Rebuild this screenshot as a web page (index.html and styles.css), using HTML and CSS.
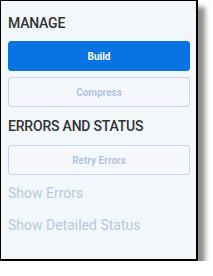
FILE: index.html
```html
<!DOCTYPE html>
<html lang="en">
<head>
  <meta charset="UTF-8">
  <title>Manage</title>
  <link rel="stylesheet" href="styles.css">
</head>
<body>
  <div class="panel">
    <h2 class="section-title">MANAGE</h2>
    <div class="btn-group">
      <button class="action-btn primary">Build</button>
      <button class="action-btn" disabled>Compress</button>
    </div>

    <h2 class="section-title errors">ERRORS AND STATUS</h2>
    <div class="btn-group">
      <button class="action-btn" disabled>Retry Errors</button>
    </div>

    <div class="links">
      <a class="link" href="#">Show Errors</a>
      <a class="link" href="#">Show Detailed Status</a>
    </div>
  </div>
</body>
</html>
```

FILE: styles.css
```css
* {
  margin: 0;
  padding: 0;
  box-sizing: border-box;
}

body {
  background: #ffffff;
  font-family: Roboto, 'Liberation Sans', sans-serif;
}

.panel {
  width: 198px;
  height: 261px;
  background: #f2f7fb;
  border: 1px solid #000000;
  border-right-width: 2px;
  border-bottom-width: 2px;
  box-shadow: 7px 7px 5px rgba(0, 0, 0, 0.45);
  padding: 14px 7px 0 7px;
  display: flex;
  flex-direction: column;
}

.section-title {
  font-size: 14px;
  font-weight: 500;
  line-height: 16px;
  color: #333333;
  letter-spacing: -0.2px;
  margin-bottom: 10px;
}

.section-title.errors {
  margin-top: 11px;
  margin-bottom: 11px;
}

.btn-group {
  display: flex;
  flex-direction: column;
  gap: 6px;
}

.action-btn {
  width: 182px;
  height: 30px;
  border-radius: 3px;
  border: 1px solid #c9d6e6;
  background: #f4f8fc;
  color: #b3c5de;
  font-family: Roboto, 'Liberation Sans', sans-serif;
  font-size: 10px;
  font-weight: 700;
}

.action-btn.primary {
  background: #0a73e4;
  border-color: #0a73e4;
  color: #ffffff;
}

.links {
  display: flex;
  flex-direction: column;
  gap: 16px;
  margin-top: 10px;
}

.link {
  font-size: 14px;
  line-height: 16px;
  color: #b8c9de;
  text-decoration: none;
}
```
